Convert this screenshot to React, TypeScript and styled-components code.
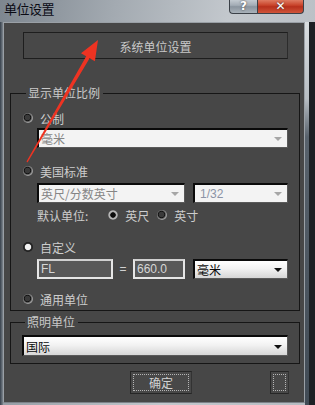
import React from "react";
import styled, { createGlobalStyle, css } from "styled-components";

const Global = createGlobalStyle`
  html, body { margin: 0; padding: 0; background: #1c2024; }
  body { font-family: "Noto Sans CJK SC", "Liberation Sans", sans-serif; }
  * { box-sizing: border-box; }
`;

const Win = styled.div`
  position: relative;
  width: 315px;
  height: 405px;
  overflow: hidden;
  display: flex;
  flex-direction: column;
  background: linear-gradient(100deg, #7d868f 0%, #a3aab1 30%, #c3c8cd 60%, #b5bbc1 100%);
`;

const TitleBar = styled.div`
  height: 22px;
  display: flex;
  align-items: flex-start;
  padding-left: 4px;
`;

const Title = styled.div`
  font-size: 13px;
  line-height: 16px;
  padding-top: 1px;
  color: #0a0a14;
  flex: 1;
  letter-spacing: -0.5px;
`;

const Caption = styled.div<{ $red?: boolean; $w: number }>`
  width: ${(p) => p.$w}px;
  height: 15px;
  margin-top: -1px;
  border: 1px solid #3b4148;
  border-top: none;
  display: flex;
  align-items: center;
  justify-content: center;
  color: #fff;
  font-family: "DejaVu Sans", sans-serif;
  font-weight: bold;
  font-size: 12px;
  text-shadow: 0 0 2px #333;
  ${(p) =>
    p.$red
      ? css`
          background: linear-gradient(#e3856c 0%, #c8432a 45%, #b7301c 55%, #d0553a 100%);
          border-radius: 0 0 4px 0;
        `
      : css`
          background: linear-gradient(#c9d0d6 0%, #a3acb5 45%, #8a949e 55%, #a9b2ba 100%);
          border-radius: 0 0 0 4px;
          border-right: none;
        `}
`;

const CaptionGroup = styled.div`
  display: flex;
  margin-right: 11px;
`;

const BodyRow = styled.div`
  flex: 1;
  display: flex;
`;

const LeftFrame = styled.div`
  width: 3px;
  background: linear-gradient(90deg, #36404b, #7e868e);
`;

const RightFrame = styled.div`
  width: 10px;
  display: flex;
`;

const RightEdge = styled.div`
  width: 4px;
  background: linear-gradient(#d9dde0 0%, #b8bec4 20%, #58626c 30%, #414b55 100%);
`;

const Desk = styled.div`
  flex: 1;
  background: #1d2125;
`;

const Panel = styled.div`
  width: 302px;
  height: 381px;
  background: #474747;
  border: 1px solid #9aa0a6;
  border-bottom-color: #7c8288;
  display: flex;
  flex-direction: column;
  padding-top: 9px;
`;

const SysButton = styled.div`
  margin-left: 19px;
  width: 265px;
  height: 27px;
  background: #484848;
  border: 1px solid #1e1e1e;
  border-right-color: #2c2c2c;
  display: flex;
  align-items: center;
  justify-content: center;
  color: #c9c9c9;
  font-size: 12px;
  padding-top: 1px;
`;

const Group = styled.fieldset<{ $mt: number; $pb: number; $pl: number }>`
  margin: ${(p) => p.$mt}px 0 0 6px;
  width: 290px;
  border: 1px solid #161616;
  padding: 0 11px ${(p) => p.$pb}px ${(p) => p.$pl}px;
  min-inline-size: 0;
  display: flex;
  flex-direction: column;
`;

const Legend = styled.legend`
  margin-left: 3px;
  padding: 0 3px 0 2px;
  font-size: 12px;
  line-height: 16px;
  height: 16px;
  color: #c9c9c9;
`;

const Row = styled.div<{ $mt: number; $indent?: number }>`
  margin-top: ${(p) => p.$mt}px;
  height: 16px;
  display: flex;
  align-items: center;
  padding-left: ${(p) => p.$indent ?? 0}px;
  color: #cdcdcd;
  font-size: 12px;
`;

const RadioDot = styled.span<{ $kind?: "off" | "white" | "black" }>`
  width: 10px;
  height: 10px;
  border-radius: 50%;
  flex: none;
  margin-right: 7px;
  ${(p) =>
    p.$kind === "white"
      ? css`
          background: radial-gradient(circle, #f2f2f2 0 2.6px, #c9c9c9 3px, #2a2a2a 3.6px, #1a1a1a 5px);
        `
      : p.$kind === "black"
      ? css`
          background: radial-gradient(circle, #0c0c0c 0 2.4px, #9a9a9a 3px, #c4c4c4 4px, #6a6a6a 5px);
        `
      : css`
          background: radial-gradient(circle at 45% 45%, #3a3a3a 0 2.5px, #111 3.2px, #6d6d6d 4.2px, #9a9a9a 5px);
        `}
`;

const Label = styled.span<{ $gap?: number }>`
  margin-right: ${(p) => p.$gap ?? 0}px;
`;

const FieldRow = styled.div<{ $mt: number; $indent: number }>`
  margin-top: ${(p) => p.$mt}px;
  padding-left: ${(p) => p.$indent}px;
  display: flex;
  align-items: center;
`;

const Select = styled.div<{ $w?: number; $h?: number; $on?: boolean }>`
  ${(p) => (p.$w ? css`width: ${p.$w}px;` : css`flex: 1;`)}
  height: ${(p) => p.$h ?? 20}px;
  border-top: 2px solid #0a0a0a;
  border-left: 2px solid #0a0a0a;
  border-right: 1px solid #5a5a5a;
  border-bottom: 1px solid #5a5a5a;
  display: flex;
  align-items: center;
  padding: 0 5px 0 2px;
  font-size: 12px;
  ${(p) =>
    p.$on
      ? css`
          background: linear-gradient(#ffffff 0%, #f2f2f2 45%, #d6d6d6 100%);
          color: #0a0a0a;
        `
      : css`
          background: #f3f3f3;
          color: #858585;
        `}
`;

const SelectText = styled.span<{ $latin?: boolean }>`
  flex: 1;
  ${(p) =>
    p.$latin &&
    css`
      font-family: "Liberation Sans", sans-serif;
      color: #8b93a6;
      padding-left: 3px;
    `}
`;

const Arrow = styled.span<{ $on?: boolean }>`
  width: 0;
  height: 0;
  border-left: ${(p) => (p.$on ? 4 : 4.5)}px solid transparent;
  border-right: ${(p) => (p.$on ? 4 : 4.5)}px solid transparent;
  border-top: 4px solid ${(p) => (p.$on ? "#111" : "#a6a6a6")};
  margin-top: 1px;
`;

const Input = styled.div<{ $w: number }>`
  width: ${(p) => p.$w}px;
  height: 20px;
  background: #585858;
  border: 2px solid #e6e6e6;
  border-top-color: #d0d0d0;
  color: #d6d6d6;
  font-family: "Liberation Sans", sans-serif;
  font-size: 12px;
  display: flex;
  align-items: center;
  padding-left: 2px;
`;

const Eq = styled.span`
  width: 20px;
  text-align: center;
  color: #d0d0d0;
  font-family: "Liberation Sans", sans-serif;
  font-size: 12px;
`;

const Spacer = styled.span<{ $w: number }>`
  width: ${(p) => p.$w}px;
  flex: none;
`;

const ButtonRow = styled.div`
  margin-top: 7px;
  padding-left: 126px;
  display: flex;
  gap: 78px;
`;

const DlgButton = styled.div<{ $w: number }>`
  width: ${(p) => p.$w}px;
  height: 23px;
  border: 1px solid #262626;
  border-right-color: #333;
  background: #484848;
  padding: 2px;
  display: flex;
`;

const Focus = styled.div`
  flex: 1;
  border: 1px dotted #b5b5b5;
  display: flex;
  align-items: center;
  justify-content: center;
  color: #d2d2d2;
  font-size: 12px;
`;

const Overlay = styled.svg`
  position: absolute;
  left: 0;
  top: 0;
  pointer-events: none;
`;

export default function App() {
  return (
    <>
      <Global />
      <Win>
        <TitleBar>
          <Title>单位设置</Title>
          <CaptionGroup>
            <Caption $w={28}>?</Caption>
            <Caption $w={47} $red>✕</Caption>
          </CaptionGroup>
        </TitleBar>
        <BodyRow>
          <LeftFrame />
          <Panel>
            <SysButton>系统单位设置</SysButton>
            <Group $mt={26} $pb={3} $pl={12}>
              <Legend>显示单位比例</Legend>
              <Row $mt={9}>
                <RadioDot />
                <Label>公制</Label>
              </Row>
              <FieldRow $mt={2} $indent={14}>
                <Select>
                  <SelectText>毫米</SelectText>
                  <Arrow />
                </Select>
              </FieldRow>
              <Row $mt={15}>
                <RadioDot />
                <Label>美国标准</Label>
              </Row>
              <FieldRow $mt={4} $indent={14}>
                <Select $w={148}>
                  <SelectText>英尺/分数英寸</SelectText>
                  <Arrow />
                </Select>
                <Spacer $w={8} />
                <Select>
                  <SelectText $latin>1/32</SelectText>
                  <Arrow />
                </Select>
              </FieldRow>
              <Row $mt={4} $indent={14}>
                <Label $gap={20}>默认单位:</Label>
                <RadioDot $kind="black" />
                <Label $gap={8}>英尺</Label>
                <RadioDot />
                <Label>英寸</Label>
              </Row>
              <Row $mt={16}>
                <RadioDot $kind="white" />
                <Label>自定义</Label>
              </Row>
              <FieldRow $mt={4} $indent={14}>
                <Input $w={76}>FL</Input>
                <Eq>=</Eq>
                <Input $w={52}>660.0</Input>
                <Spacer $w={8} />
                <Select $on>
                  <SelectText>毫米</SelectText>
                  <Arrow $on />
                </Select>
              </FieldRow>
              <Row $mt={12}>
                <RadioDot />
                <Label>通用单位</Label>
              </Row>
            </Group>
            <Group $mt={3} $pb={7} $pl={11}>
              <Legend>照明单位</Legend>
              <FieldRow $mt={5} $indent={0}>
                <Select $on $h={21}>
                  <SelectText>国际</SelectText>
                  <Arrow $on />
                </Select>
              </FieldRow>
            </Group>
            <ButtonRow>
              <DlgButton $w={62}>
                <Focus>确定</Focus>
              </DlgButton>
              <DlgButton $w={19}>
                <Focus />
              </DlgButton>
            </ButtonRow>
          </Panel>
          <RightFrame>
            <RightEdge />
            <Desk />
          </RightFrame>
        </BodyRow>
        <Overlay width={315} height={405} viewBox="0 0 315 405">
          <polygon
            points="98,40 81,53.3 86.2,56.3 26.5,161.6 27.5,162.4 89.6,58.3 94.9,61.3"
            fill="#ee3322"
          />
        </Overlay>
      </Win>
    </>
  );
}
